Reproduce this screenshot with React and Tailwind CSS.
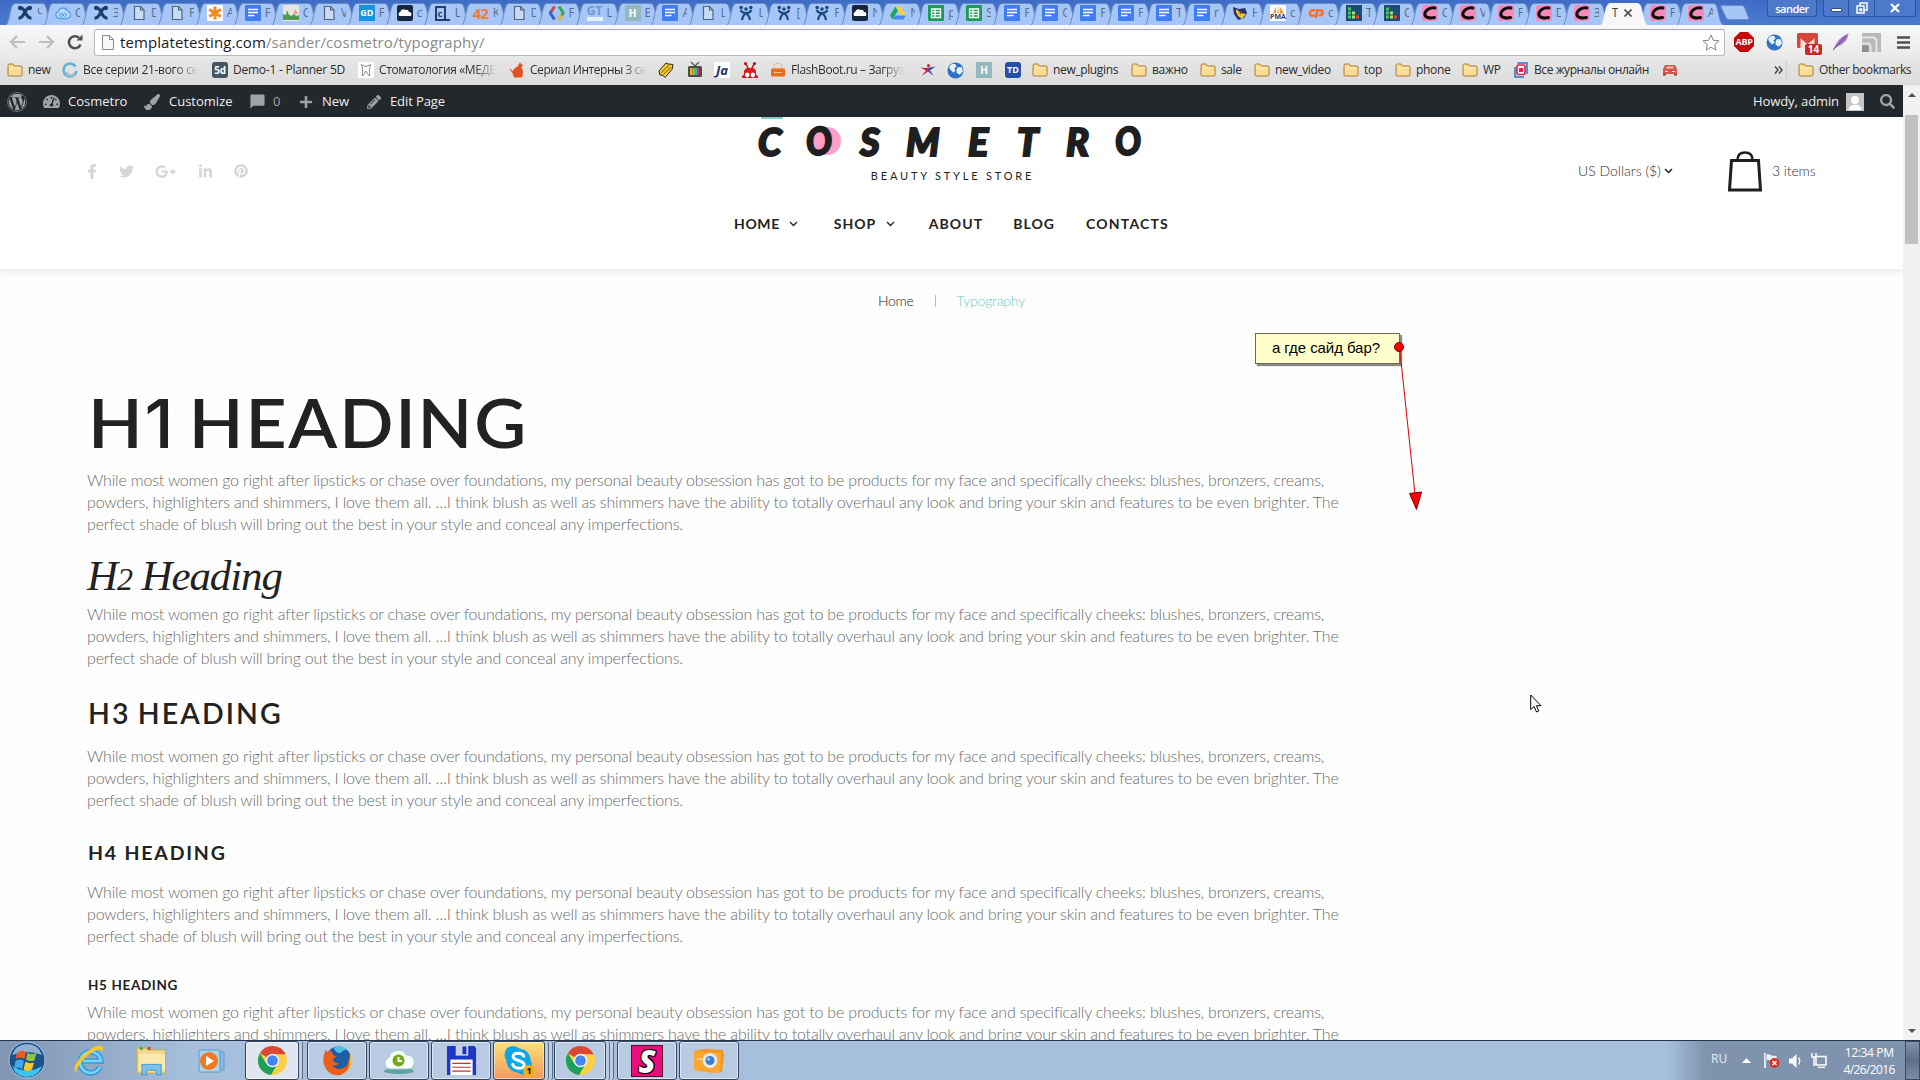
import React from "react";
import { FaFacebookF, FaTwitter, FaGooglePlusG, FaLinkedinIn, FaPinterest, FaWordpress, FaTachometerAlt, FaPaintBrush, FaPlus, FaPencilAlt, FaSearch } from "react-icons/fa";
import { MdModeComment } from "react-icons/md";

/* ---------- favicons ---------- */

const DocFile = () => (
  <svg viewBox="0 0 16 16" className="size-4">
    <path d="M3.500 1.500h6L13 5v9.500H3.500z" fill="#c6dbf7" stroke="#56647a" strokeWidth="1.200" />
    <path d="M9.500 1.500V5H13" fill="none" stroke="#56647a" strokeWidth="1.200" />
  </svg>
);
const Confluence = () => (
  <svg viewBox="0 0 16 16" className="size-4">
    <path d="M2 3c3-1 4.500 1 6 4s3 6.500 6.500 6M14 3c-3-1-4.500 1-6 4s-3 6.500-6.500 6" fill="none" stroke="#1c3c6b" strokeWidth="3" />
    <circle cx="3.200" cy="3" r="2.200" fill="#1c3c6b" />
    <circle cx="12.800" cy="3" r="2.200" fill="#1c3c6b" />
  </svg>
);
const Jira = () => (
  <svg viewBox="0 0 16 16" className="size-4">
    <circle cx="8" cy="4" r="1.800" fill="#1f4b82" />
    <circle cx="3.200" cy="2.600" r="1.800" fill="#1f4b82" />
    <circle cx="12.800" cy="2.600" r="1.800" fill="#1f4b82" />
    <path d="M2.500 5C4 8 6 7.500 8 8.500S11.500 12 12 15M13.500 5C12 8 10 7.500 8 8.500S4.500 12 4 15" fill="none" stroke="#1f4b82" strokeWidth="2.200" />
  </svg>
);
const GDoc = () => (
  <svg viewBox="0 0 16 16" className="size-4">
    <rect width="16" height="16" rx="1" fill="#3f7df0" />
    <path d="M3 4.500h10M3 7.500h10M3 10.500h6.500" stroke="#fff" strokeWidth="1.500" />
  </svg>
);
const GSheet = () => (
  <svg viewBox="0 0 16 16" className="size-4">
    <rect width="16" height="16" rx="1" fill="#1c9a58" />
    <path d="M3.500 4h9v8.500h-9zM3.500 6.800h9M3.500 9.600h9M7 4v8.500" fill="none" stroke="#fff" strokeWidth="1.300" />
  </svg>
);
const CloudOutline = () => (
  <svg viewBox="0 0 16 16" className="size-4">
    <path d="M4 13.500a3.500 3.500 0 0 1-.8-6.800A5 5 0 0 1 12.600 6a3.800 3.800 0 0 1-.4 7.500z" fill="#b9d8fb" stroke="#55a0ee" strokeWidth="1.300" />
    <circle cx="6" cy="9.800" r="1.600" fill="none" stroke="#55a0ee" />
    <circle cx="9.800" cy="9.800" r="1.600" fill="none" stroke="#55a0ee" />
  </svg>
);
const Asterisk = () => (
  <svg viewBox="0 0 16 16" className="size-4">
    <rect width="16" height="16" fill="#fff" />
    <path d="M8 1.500v13M2.200 4.500l11.600 7M13.800 4.500l-11.600 7" stroke="#f58a20" strokeWidth="3" />
  </svg>
);
const Castle = () => (
  <svg viewBox="0 0 16 16" className="size-4">
    <rect width="16" height="16" fill="#e9e6df" />
    <path d="M0 15V9l3 1 1-5 2 5 3 1 1-2 4 2 2-1v5z" fill="#4f9a4c" />
    <path d="M10 9l2.500-5L15 9z" fill="#e3a18f" />
  </svg>
);
const DarkCloud = () => (
  <svg viewBox="0 0 16 16" className="size-4">
    <rect width="16" height="16" rx="2" fill="#17263f" />
    <path d="M2.500 11a2.200 2.200 0 0 1 .8-4 3 3 0 0 1 5-2 2.800 2.800 0 0 1 3.700 2A2.200 2.200 0 0 1 13.500 11z" fill="#fff" />
  </svg>
);
const Brackets = () => (
  <svg viewBox="0 0 16 16" className="size-4">
    <path d="M3 5.500L1.200 8l4.300 6.500" fill="none" stroke="#3a62c9" strokeWidth="3" />
    <path d="M2.500 6.500L5.500 1.500" stroke="#e04535" strokeWidth="3" />
    <path d="M10 1.500l4.500 6.500" fill="none" stroke="#35a853" strokeWidth="3" />
    <path d="M14.500 7.500l-4.500 7" fill="none" stroke="#35a853" strokeWidth="3" />
    <path d="M12.500 10.500l-3 4.500" stroke="#f2b632" strokeWidth="3" />
  </svg>
);
const Drive = () => (
  <svg viewBox="0 0 16 16" className="size-4">
    <path d="M5.500 1.500L0 10.500l2.500 4L8 5.500z" fill="#1da462" />
    <path d="M5.500 1.500h5l5.500 9h-5z" fill="#fccd3e" />
    <path d="M5.300 10.500H16l-2.500 4H2.800z" fill="#4688f4" />
  </svg>
);
const Bee = () => (
  <svg viewBox="0 0 16 16" className="size-4">
    <path d="M1 2l6 2 6-1 2 5-3 5-6 2-4-6z" fill="#26307a" />
    <path d="M4 4l5 4 5 1-4 5-4-3-2-4z" fill="#f1c626" />
    <path d="M7 5l3 2-2 3z" fill="#7b4a17" />
  </svg>
);
const Pma = () => (
  <span className="flex size-4 flex-col items-center bg-white">
    <svg viewBox="0 0 16 9" className="h-[9px] w-4">
      <path d="M3 8.500L6 1v7.500zM7 8.500L8.500 0v8.500zM9.500 8.500L10 2l4 6.500z" fill="#f39a2c" />
    </svg>
    <span className="text-[7px] leading-[6px] font-bold text-[#3b3b56]">PMA</span>
  </span>
);
const CPanel = () => (
  <svg viewBox="0 0 16 16" className="size-4">
    <path d="M7 10.500H4.500a2.600 2.600 0 0 1 0-5.200H7M7.500 13l2-7.700h2.700a2.400 2.400 0 0 1 0 4.900h-1.500" fill="none" stroke="#ff6c2c" strokeWidth="2.600" />
  </svg>
);
const Squares = () => (
  <svg viewBox="0 0 16 16" className="size-4">
    <rect width="16" height="16" fill="#1d4c74" />
    <path d="M2 2.500h3v3H2zM2 6.500h3v3H2zM2 10.500h3v3H2z" fill="#4cc35c" />
    <path d="M6 6.500h3v3H6zM6 10.500h3v3H6z" fill="#a9dd7a" />
    <rect x="10" y="10.500" width="3" height="3" fill="#e0433e" />
  </svg>
);
const MarkerC = () => (
  <svg viewBox="0 0 16 16" className="size-4">
    <rect width="16" height="16" rx="3" fill="#f68bb9" />
    <path d="M13 3C8 2 3 5.500 2.800 9S8 13.500 12.500 12.500" fill="none" stroke="#0d0a0c" strokeWidth="3" strokeLinecap="round" />
  </svg>
);
const Gd = () => <span className="grid size-4 place-items-center bg-[#1695dd] text-[9px] font-bold text-white">GD</span>;
const CUnder = () => (
  <span className="flex size-4 items-end">
    <span className="grid h-[15px] w-[11px] place-items-center border-2 border-[#24406b] text-[9px] leading-none font-bold text-[#24406b]">c</span>
    <span className="h-[2px] w-[4px] bg-[#24406b]" />
  </span>
);
const FortyTwo = () => <span className="flex size-4 items-center justify-center text-[15px] leading-[12px] font-bold tracking-tighter text-[#f07b2c]">42</span>;
const Gt = () => <span className="flex size-4 items-center justify-center border-b-4 border-[#e6f0fb] text-[12px] leading-3 font-bold text-[#6f98cf]">GT</span>;
const HBox = () => <span className="grid size-4 place-items-center bg-[#93b8c0] text-[10px] font-bold text-white">H</span>;

const tabs = [
  [Confluence, "Ч"], [CloudOutline, "C"], [Confluence, "Э"], [DocFile, "D"], [DocFile, "F"], [Asterisk, "A"],
  [GDoc, "F"], [Castle, "C"], [DocFile, "V"], [Gd, "F"], [DarkCloud, "c"], [CUnder, "L"], [FortyTwo, "K"],
  [DocFile, "D"], [Brackets, "F"], [Gt, "L"], [HBox, "E"], [GDoc, "A"], [DocFile, "L"], [Jira, "L"], [Jira, "["],
  [Jira, "F"], [DarkCloud, "N"], [Drive, "N"], [GSheet, "p"], [GSheet, "S"], [GDoc, "F"], [GDoc, "C"], [GDoc, "F"],
  [GDoc, "F"], [GDoc, "T"], [GDoc, "r"], [Bee, "H"], [Pma, "c"], [CPanel, "c"], [Squares, "T"], [Squares, "C"],
  [MarkerC, "C"], [MarkerC, "V"], [MarkerC, "F"], [MarkerC, "D"], [MarkerC, "З"], [null, "T"], [MarkerC, "F"], [MarkerC, "A"],
];

function Tab({ Icon, label }) {
  const active = !Icon;
  return (
    <div className={active ? "relative z-10 flex h-[22px] w-[37.97px] shrink-0 items-center pb-[2px]" : "relative flex h-[22px] w-[37.97px] shrink-0 items-center pb-[2px]"}>
      <svg viewBox="0 0 46 22" className="absolute top-0 left-0 h-[22px] w-[46px]">
        <path d="M0 22C3 21 4 5 7 1.500Q8 .5 9 .5H36Q38 .5 39 2C41.500 6 42 20 46 22" fill={active ? "#f7f7f7" : "#a5c6f6"} stroke={active ? "#f7f7f7" : "#6a8cc6"} />
      </svg>
      {active ? (
        <>
          <span className="relative ml-[11px] w-[6px] overflow-hidden text-[12px] text-[#444]">T</span>
          <svg viewBox="0 0 8 8" className="relative ml-[6px] size-[8px] shrink-0">
            <path d="M.5.5l7 7M7.500.5l-7 7" stroke="#4d4d4d" strokeWidth="1.600" />
          </svg>
        </>
      ) : (
        <>
          <span className="relative ml-[11px]"><Icon /></span>
          <span className="relative ml-[4px] w-[5px] overflow-hidden text-[12px] text-[#5a6d8d]">{label}</span>
        </>
      )}
    </div>
  );
}

/* ---------- bookmark icons ---------- */

const Folder = () => (
  <svg viewBox="0 0 16 14" className="h-[14px] w-4">
    <path d="M1 12V2.500Q1 1 2.500 1H6l1.500 2H14q1 0 1 1v8q0 1-1 1H2q-1 0-1-1z" fill="#fbdc94" stroke="#a97a33" />
    <path d="M2 5h12" stroke="#fff0c8" />
  </svg>
);
const Swirl = () => (
  <svg viewBox="0 0 16 16" className="size-4">
    <path d="M13.500 4.500A6.500 6.500 0 1 0 14.500 9" fill="none" stroke="#58b2d8" strokeWidth="2.400" />
    <path d="M4 10a5 5 0 0 0 9 1" fill="none" stroke="#a8bccb" strokeWidth="2.400" />
  </svg>
);
const FiveD = () => <span className="grid size-4 place-items-center rounded-[3px] bg-[#46545f] text-[10px] font-bold text-white">5d</span>;
const Tooth = () => (
  <svg viewBox="0 0 16 16" className="size-4">
    <rect width="16" height="16" fill="#fff" />
    <path d="M3 2c2 3 2 7 1 12M13 2c-2 3-2 7-1 12M4 3q4 3 8 0M5 14l3-5 3 5" fill="none" stroke="#8d8d8d" />
  </svg>
);
const Fox = () => (
  <svg viewBox="0 0 16 16" className="size-4">
    <path d="M11 0l1 2 2 1-1.500 2.500c2 3 1.500 7 .5 10H5L4 12 0 6l4 3c1-3 4-4 5-5z" fill="#e4501c" />
  </svg>
);
const YellowRibbon = () => (
  <svg viewBox="0 0 16 16" className="size-4">
    <path d="M1 9L8 1l2 1 5 .5-1 5-7 8-2-2-3-.5z" fill="#f4d343" stroke="#222" />
    <path d="M3 11l8-8M5 13l8-8" stroke="#b98012" strokeWidth="1.400" />
  </svg>
);
const Tv = () => (
  <svg viewBox="0 0 16 16" className="size-4">
    <path d="M4 0l4 4 4-4" fill="none" stroke="#555" strokeWidth="1.300" />
    <rect x="1" y="4" width="14" height="11" rx="1.500" fill="#4c4a4a" />
    <path d="M3 6h2.500v7H3z" fill="#f5a623" /><path d="M5.500 6H8v7H5.500z" fill="#7ac143" /><path d="M8 6h2.500v7H8z" fill="#29a8e0" /><path d="M10.500 6H12v7h-1.500z" fill="#e23d3d" />
  </svg>
);
const Ja = () => <span className="grid size-4 place-items-center bg-white text-[13px] leading-4 font-bold text-[#1c2d63] italic">Ja</span>;
const Ant = () => (
  <svg viewBox="0 0 16 16" className="size-4">
    <path d="M4 2l2.500 5M12 2L9.500 7" stroke="#b3161b" strokeWidth="1.500" />
    <circle cx="3.500" cy="1.600" r="1.600" fill="#b3161b" /><circle cx="12.500" cy="1.600" r="1.600" fill="#b3161b" />
    <path d="M0 16v-2l2-1.500V9q1-3 4-3h4q3 0 4 3v3.500l2 1.500v2z" fill="#d81920" />
    <ellipse cx="5.200" cy="13" rx="2.200" ry="2.400" fill="#fff" /><ellipse cx="10.800" cy="13" rx="2.200" ry="2.400" fill="#fff" />
  </svg>
);
const Usb = () => (
  <svg viewBox="0 0 16 16" className="size-4">
    <path d="M4 3q4-4 8 0v4H4z" fill="#e8e1dc" stroke="#c9b8ad" />
    <rect x="1" y="6.500" width="14" height="8" rx="1" fill="#ea6f1c" />
    <path d="M4 10.500h8" stroke="#ffc594" />
  </svg>
);
const StarMan = () => (
  <svg viewBox="0 0 16 16" className="size-4">
    <circle cx="8.500" cy="3.500" r="1.500" fill="#c72038" />
    <path d="M6 6l9.500-1.500L10 8.500l4 5.500-5.500-4z" fill="#2a5ba8" />
    <path d="M.5 5.500L10 6.500 8 9.500 1.500 14 6 8.500z" fill="#c72038" />
  </svg>
);
const Globe = () => (
  <svg viewBox="0 0 16 16" className="size-[17px]">
    <circle cx="8" cy="8" r="7.500" fill="#2f72c4" />
    <path d="M3 3q3-2 5-1l1 2-2 2 1 2-2 2-3-3-1-2zM10 5l4 0 1 4-3 3-3-2 0-3z" fill="#e6f1fb" />
  </svg>
);
const Td = () => <span className="grid size-4 place-items-center rounded-[3px] bg-[#2450a8] text-[9px] font-bold text-white">TD</span>;
const Journal = () => (
  <svg viewBox="0 0 16 16" className="size-4">
    <path d="M4.500 1H14v11M2 5v10h9" fill="none" stroke="#2476c6" strokeWidth="1.500" />
    <rect x="4" y="3" width="8" height="9.500" rx="1.500" fill="#fff" stroke="#e2234f" strokeWidth="1.700" />
    <rect x="6" y="6" width="4" height="4" fill="#e2234f" />
  </svg>
);
const Car = () => (
  <svg viewBox="0 0 16 16" className="size-4">
    <path d="M1 7l2-4h10l2 4v5H1z" fill="#d2564a" /><path d="M4 6.500L5 4.500h6l1 2z" fill="#f3c8c2" /><path d="M1 12h3v1.500H1zM12 12h3v1.500h-3z" fill="#9b3129" />
    <path d="M3 9.500h3M10 9.500h3" stroke="#f8dcd8" />
  </svg>
);

const bookmarks = [
  [Folder, "new", "w-[55px] tracking-[-0.3px]"],
  [Swirl, "Все серии 21-вого се", "w-[150px] tracking-[-0.31px]", 1],
  [FiveD, "Demo-1 - Planner 5D", "w-[146px] tracking-[-0.24px]"],
  [Tooth, "Стоматология «МЕДЕ", "w-[151px] tracking-[-0.4px]", 1],
  [Fox, "Сериал Интерны 3 се", "w-[149px] tracking-[-0.45px]", 1],
  [YellowRibbon, "", "w-[29px]"], [Tv, "", "w-[27px]"], [Ja, "", "w-[28px]"], [Ant, "", "w-[28px]"],
  [Usb, "FlashBoot.ru – Загруз", "w-[150px] tracking-[-0.38px]", 1],
  [StarMan, "", "w-[27px]"], [Globe, "", "w-[29px]"], [HBox, "", "w-[29px]"], [Td, "", "w-[27px]"],
  [Folder, "new_plugins", "w-[99px] tracking-[-0.36px]"],
  [Folder, "важно", "w-[69px] tracking-[-0.3px]"],
  [Folder, "sale", "w-[54px] tracking-[-0.4px]"],
  [Folder, "new_video", "w-[89px] tracking-[-0.36px]"],
  [Folder, "top", "w-[52px] tracking-[-0.3px]"],
  [Folder, "phone", "w-[67px] tracking-[-0.3px]"],
  [Folder, "WP", "w-[51px] tracking-[-0.4px]"],
  [Journal, "Все журналы онлайн", "w-[149px] tracking-[-0.42px]"],
  [Car, "", "w-[20px]"],
];

function Bookmark({ Icon, label, size, clipped }) {
  return (
    <div className={"flex shrink-0 items-center " + size}>
      <span className="shrink-0"><Icon /></span>
      {label && (
        <span className={clipped ? "ml-[5px] bg-linear-to-r from-[#2b2b2b] from-80% to-[#dedede] to-100% bg-clip-text whitespace-nowrap text-transparent" : "ml-[5px] whitespace-nowrap"}>{label}</span>
      )}
    </div>
  );
}

/* ---------- browser chrome ---------- */

function TitleBar() {
  return (
    <div className="flex h-[25px] items-start bg-linear-to-b from-[#3e6cc4] to-[#4a7bd0] pl-[6px]">
      <div className="flex pt-[3px]">
        {tabs.map(([Icon, label], i) => <Tab key={i} Icon={Icon} label={label} />)}
      </div>
      <svg viewBox="0 0 30 15" className="mt-[5px] ml-[5px] h-[15px] w-[30px]">
        <path d="M1.500.5h20q2 0 3 2l4 10q.5 2-1 2H9q-2 0-3-2L1 2q-.5-1.500.5-1.500z" fill="#a5c6f6" stroke="#6a8cc6" />
      </svg>
      <div className="ml-auto flex pr-[4px]">
        <div className="h-[17px] w-[50px] rounded-b-[3px] border border-t-0 border-[#2d55a3] bg-[#4c79ca] text-center text-[11px] leading-[18px] font-semibold tracking-[-0.5px] text-white">sander</div>
        <div className="ml-[6px] flex h-[17px] w-[93px] divide-x divide-[#2d55a3] rounded-b-[3px] border border-t-0 border-[#2d55a3] bg-[#4c79ca]">
          <div className="flex w-[25px] items-end justify-center pb-[4px]"><span className="h-[4px] w-[11px] rounded-[1px] border border-[#31518c] bg-white" /></div>
          <div className="grid w-[26px] place-items-center">
            <svg viewBox="0 0 12 12" className="size-[12px]"><path d="M4 4V1h7v7H8M1 4h7v7H1zM4 7h1.500v1.500H4z" fill="none" stroke="#fff" strokeWidth="1.500" /></svg>
          </div>
          <div className="grid flex-1 place-items-center">
            <svg viewBox="0 0 10 10" className="size-[10px]"><path d="M1 1l8 8M9 1l-8 8" stroke="#fff" strokeWidth="2.200" /></svg>
          </div>
        </div>
      </div>
    </div>
  );
}

function AddressBar() {
  return (
    <div className="flex h-[34px] items-center bg-linear-to-b from-[#f8f8f8] to-[#e9e9e9] text-[#bdbdbd]">
      <svg viewBox="0 0 16 14" className="ml-[9px] h-[14px] w-4"><path d="M8 1L2 7l6 6M2 7h14" fill="none" stroke="currentColor" strokeWidth="2.200" /></svg>
      <svg viewBox="0 0 16 14" className="ml-[14px] h-[14px] w-4"><path d="M8 1l6 6-6 6M14 7H0" fill="none" stroke="currentColor" strokeWidth="2.200" /></svg>
      <svg viewBox="0 0 16 16" className="ml-[12px] size-4"><path d="M13.500 10.500A6 6 0 1 1 12 3.800" fill="none" stroke="#505050" strokeWidth="2.600" /><path d="M9.500 6.500H15.500V.5z" fill="#505050" /></svg>
      <div className="ml-[11px] flex h-[27px] w-[1631px] items-center rounded-[3px] border border-[#b9b9b9] border-t-[#a8a8a8] bg-white">
        <svg viewBox="0 0 12 15" className="ml-[7px] h-[15px] w-3"><path d="M.5.5h7l4 4v10H.5zM7.500.5v4h4" fill="#f7f7f7" stroke="#8b8b8b" /></svg>
        <div className="ml-[6px] text-[15px] leading-[20px] tracking-[0.09px] text-[#8a8a8a]"><span className="text-[#1a1a1a]">templatetesting.com</span>/sander/cosmetro/typography/</div>
        <svg viewBox="0 0 18 17" className="mr-[4px] ml-auto h-[17px] w-[18px]"><path d="M9 1l2.300 5.200 5.700.6-4.300 3.800 1.200 5.500L9 13.300l-4.900 2.800 1.200-5.500L1 6.800l5.700-.6z" fill="#fff" stroke="#848484" /></svg>
      </div>
      <div className="ml-[9px] grid size-[20px] place-items-center bg-[#c4090b] text-[9px] font-bold tracking-[-0.3px] text-white [clip-path:polygon(30%_0,70%_0,100%_30%,100%_70%,70%_100%,30%_100%,0_70%,0_30%)]">ABP</div>
      <span className="ml-[12px]"><Globe /></span>
      <div className="relative ml-[14px] h-[18px] w-[21px]">
        <svg viewBox="0 0 21 16" className="h-4 w-[21px]"><rect width="21" height="15" rx="1.500" fill="#d8433a" /><path d="M3.500 15V4l7 5.500 7-5.500v11z" fill="#f1dedc" /><path d="M1 1.500l9.500 8 9.500-8" fill="none" stroke="#d8433a" strokeWidth="2.500" /></svg>
        <span className="absolute top-[11px] left-[8px] h-[11px] w-[17px] rounded-[2px] bg-[#d02525] text-center text-[10px] leading-[11px] font-bold text-white">14</span>
      </div>
      <svg viewBox="0 0 17 18" className="ml-[14px] h-[18px] w-[17px]"><path d="M1 17L4 11Q6 7 10 4t6.500-3.500Q16 6 12 9.500t-6 3.500z" fill="#a47bc6" /><path d="M1 17L14 3" stroke="#5d3a86" /></svg>
      <svg viewBox="0 0 19 19" className="ml-[13px] size-[19px]"><rect width="19" height="19" fill="#b9b9b9" /><path d="M0 4.500H10q4.500 0 4.500 4.500V19M0 10.500h5q3.500 0 3.500 3.500V19" fill="none" stroke="#e6e6e6" strokeWidth="2" /><path d="M0 12.500h6.500V19H0z" fill="#8f8f8f" /></svg>
      <svg viewBox="0 0 13 13" className="ml-[16px] h-[13px] w-[13px]"><path d="M0 1.500h13M0 6.500h13M0 11.500h13" stroke="#505050" strokeWidth="2.600" /></svg>
    </div>
  );
}

function BookmarkBar() {
  return (
    <div className="flex h-[26px] items-center bg-linear-to-b from-[#e6e6e6] to-[#dcdcdc] pb-[4px] pl-[7px] text-[12px] text-[#2b2b2b]">
      {bookmarks.map(([Icon, label, size, clipped], i) => <Bookmark key={i} Icon={Icon} label={label} size={size} clipped={clipped} />)}
      <svg viewBox="0 0 9 8" className="ml-[92px] h-2 w-[9px]"><path d="M1 .5L4 4 1 7.500M5 .5L8 4 5 7.500" fill="none" stroke="#444" strokeWidth="1.500" /></svg>
      <span className="ml-[3px] h-5 w-px bg-[#cfcfcf]" />
      <span className="ml-[11px]"><Folder /></span>
      <span className="ml-[5px] tracking-[-0.43px] whitespace-nowrap">Other bookmarks</span>
    </div>
  );
}

/* ---------- site ---------- */

function AdminBar() {
  return (
    <div className="flex h-8 shrink-0 items-center bg-[#23282d] pt-[1px] text-[13px] text-[#eee]">
      <FaWordpress className="ml-[7px] size-[20px] text-[#9ea3a8]" />
      <FaTachometerAlt className="ml-[16px] size-[17px] text-[#9ea3a8]" />
      <span className="ml-[8px] w-[59px]">Cosmetro</span>
      <FaPaintBrush className="ml-[17px] size-[16px] text-[#9ea3a8]" />
      <span className="ml-[9px] w-[64px]">Customize</span>
      <MdModeComment className="ml-[16px] size-[17px] text-[#9ea3a8] -scale-x-100" />
      <span className="ml-[7px] w-[7px] text-[#9ea3a8]">0</span>
      <FaPlus className="ml-[19px] size-[14px] text-[#9ea3a8]" />
      <span className="ml-[9px] w-[27px]">New</span>
      <FaPencilAlt className="ml-[18px] size-[14px] text-[#9ea3a8]" />
      <span className="ml-[9px] tracking-[-0.1px] whitespace-nowrap">Edit Page</span>
      <span className="ml-auto tracking-[-0.1px]">Howdy, admin</span>
      <svg viewBox="0 0 18 18" className="ml-[7px] size-[18px]">
        <rect width="18" height="18" fill="#c5c5c5" />
        <circle cx="9" cy="7" r="4" fill="#fff" /><path d="M2.500 17q0-5 6.500-5.500 6.500.5 6.500 5.500z" fill="#fff" />
      </svg>
      <FaSearch className="mr-[8px] ml-[16px] size-[15px] text-[#9ea3a8]" />
    </div>
  );
}

const Chevron = ({ className }) => (
  <svg viewBox="0 0 9 6" className={"h-[6px] w-[9px] " + className}><path d="M1 1l3.500 3.500L8 1" fill="none" stroke="#222" strokeWidth="1.300" /></svg>
);

function Logo() {
  return (
    <div className="flex flex-col items-center">
      <div className="flex h-[2px] w-[387px] pl-[3px]"><span className="h-[2px] w-[22px] bg-[#83cbc5]" /></div>
      <div className="mt-[6px] flex h-[32px] w-[387px] text-[38px] leading-[32px] font-black text-[#1f1f1f] italic [-webkit-text-stroke:2px_#1f1f1f] [stroke-linejoin:round]">
        <span className="w-[48px] shrink-0">C</span>
        <span className="relative w-[54px] shrink-0">
          <span className="absolute top-[2px] left-[7px] size-[28px] rounded-full bg-[#ff9fc8]" />
          <span className="relative inline-block origin-left scale-x-90 -rotate-6">O</span>
        </span>
        <span className="w-[46px] shrink-0">S</span>
        <span className="w-[62px] shrink-0">M</span>
        <span className="w-[49px] shrink-0">E</span>
        <span className="w-[49px] shrink-0">T</span>
        <span className="w-[49px] shrink-0">R</span>
        <span className="inline-block w-[30px] shrink-0 origin-left scale-x-90 -rotate-6">O</span>
      </div>
      <div className="mt-[10px] ml-[2px] text-[11px] leading-[17px] tracking-[2.8px] text-[#1f1f1f]">BEAUTY STYLE STORE</div>
    </div>
  );
}

function Header() {
  return (
    <header className="flex h-[152px] shrink-0 justify-between bg-white shadow-[0_2px_8px_rgba(0,0,0,0.1)]">
      <div className="flex h-[108px] w-[600px] items-center pl-[87px] text-[#d6d6d6]">
        <FaFacebookF className="h-[15px] w-[10px]" />
        <FaTwitter className="ml-[22px] size-[15px]" />
        <FaGooglePlusG className="ml-[21px] size-[21px]" />
        <FaLinkedinIn className="ml-[22px] size-[15px]" />
        <FaPinterest className="ml-[21px] size-[14px]" />
      </div>
      <div className="flex w-[703px] flex-col items-center">
        <Logo />
        <nav className="mt-[29px] flex w-[435px] items-center text-[14px] leading-[22px] font-bold text-[#222]">
          <span className="w-[47px] tracking-[0.6px]">HOME</span><Chevron className="mr-[36px] ml-[8px]" />
          <span className="w-[43px] tracking-[1px]">SHOP</span><Chevron className="mr-[34px] ml-[9px]" />
          <span className="w-[85px] tracking-[1.1px]">ABOUT</span>
          <span className="w-[73px] tracking-[1px]">BLOG</span>
          <span className="tracking-[1.2px]">CONTACTS</span>
        </nav>
      </div>
      <div className="flex h-[107px] w-[600px] items-center pl-[275px] text-[14px] font-light text-[#333]">
        <span className="w-[84px] whitespace-nowrap">US Dollars ($)</span>
        <svg viewBox="0 0 9 6" className="ml-[2px] h-[6px] w-[9px]"><path d="M1 1l3.500 3.500L8 1" fill="none" stroke="#222" strokeWidth="1.500" /></svg>
        <svg viewBox="0 0 34 41" className="mt-[2px] ml-[55px] h-[41px] w-[34px]"><path d="M3.500 9.500h27l2 29.500H1.500z" fill="none" stroke="#1f1f1f" strokeWidth="3" /><path d="M9.500 9c0-5 3-7.500 7.500-7.500S24.500 4 24.500 9" fill="none" stroke="#1f1f1f" strokeWidth="2.500" /></svg>
        <span className="ml-[10px] tracking-[-0.1px]">3 items</span>
      </div>
    </header>
  );
}

function Copy({ className }) {
  return (
    <p className={"text-[16px] leading-[22px] font-light tracking-[-0.184px] whitespace-nowrap text-[#6c6c6c] " + className}>
      While most women go right after lipsticks or chase over foundations, my personal beauty obsession has got to be products for my face and specifically cheeks: blushes, bronzers, creams,
      <br />powders, highlighters and shimmers, I love them all. …I think blush as well as shimmers have the ability to totally overhaul any look and bring your skin and features to be even brighter. The
      <br />perfect shade of blush will bring out the best in your style and conceal any imperfections.
    </p>
  );
}

function Callout() {
  return (
    <div className="absolute top-[248px] left-[1255px] h-[180px] w-[170px]">
      <div className="h-[31px] w-[145px] border border-[#6b6b52] bg-[#ffffcc] pl-[16px] font-['Liberation_Sans',sans-serif] text-[15px] leading-[28px] tracking-[-0.07px] text-black shadow-[2px_2px_1px_#8a8a8a]">а где сайд бар?</div>
      <svg viewBox="0 0 170 180" className="absolute top-0 left-0 h-[180px] w-[170px]">
        <path d="M144.500 14L160 161" stroke="#e00000" />
        <circle cx="144" cy="14" r="4.500" fill="#f00" stroke="#700" strokeWidth="1" />
        <path d="M154.500 160.500l12-1.500-5 17.500z" fill="#f00" stroke="#700" strokeWidth="1" />
      </svg>
    </div>
  );
}

function Page() {
  return (
    <div className="relative flex h-[955px] w-[1903px] flex-col overflow-hidden bg-[#fefefe]">
      <AdminBar />
      <div className="flex flex-col font-['Lato',sans-serif]">
        <Header />
        <div className="mt-[22px] flex h-5 items-center justify-center text-[14px] leading-5 font-light">
          <span className="tracking-[-0.3px] text-[#222]">Home</span>
          <span className="mx-[21px] h-[12px] w-px bg-[#bbb]" />
          <span className="tracking-[-0.2px] text-[#6fcac8]">Typography</span>
        </div>
        <main className="px-[87px] text-[#222]">
          <h1 className="mt-[76px] ml-[1px] h-[70px] w-fit origin-left scale-x-105 text-[68px] leading-[70px] font-semibold tracking-[1.700px] [word-spacing:-6px]">H<span className="font-['Inter',sans-serif] text-[67px] leading-[60px] font-medium">1</span> HEADING</h1>
          <Copy className="mt-[12px]" />
          <h2 className="mt-[19px] h-[44px] font-['Liberation_Serif',serif] text-[43px] leading-[44px] tracking-[-1.1px] italic">H<span className="text-[32px] leading-[30px]">2</span> Heading</h2>
          <Copy className="mt-[5px]" />
          <h3 className="mt-[27px] ml-[1px] h-[34px] text-[28.500px] leading-[34px] font-semibold tracking-[2.1px] [word-spacing:-2px]">H3 HEADING</h3>
          <Copy className="mt-[15px]" />
          <h4 className="mt-[30px] ml-[1px] h-6 text-[19.500px] leading-6 font-bold tracking-[1.800px]">H4 HEADING</h4>
          <Copy className="mt-[16px]" />
          <h5 className="mt-[30px] ml-[1px] h-4 text-[13.500px] leading-4 font-bold tracking-[0.65px]">H5 HEADING</h5>
          <Copy className="mt-[8px]" />
        </main>
      </div>
      <Callout />
      <svg viewBox="0 0 12 19" className="absolute top-[609px] left-[1530px] h-[19px] w-3"><path d="M.7 1v14.500l3.400-3.100L6.500 18l2.300-1-2.400-5.300h4.600z" fill="#fff" stroke="#000" /></svg>
    </div>
  );
}

function Scrollbar() {
  return (
    <div className="flex h-[955px] w-[17px] flex-col items-center bg-[#f1f1f1]">
      <svg viewBox="0 0 8 4" className="mt-[8px] h-1 w-2"><path d="M0 4l4-4 4 4z" fill="#505050" /></svg>
      <div className="mt-[18px] h-[129px] w-[13px] bg-[#c1c1c1]" />
      <svg viewBox="0 0 8 4" className="mt-auto mb-[7px] h-1 w-2"><path d="M0 0l4 4 4-4z" fill="#505050" /></svg>
    </div>
  );
}

/* ---------- taskbar ---------- */

const Chrome = () => (
  <svg viewBox="0 0 32 32" className="size-[31px]">
    <circle cx="16" cy="16" r="15" fill="#fbd047" />
    <path d="M16 16L3 8.500A15 15 0 0 1 29.500 9.500H16z" fill="#dc4636" />
    <path d="M3 8.500A15 15 0 0 0 14.500 31l7-12L16 16 9.500 19z" fill="#1da05c" />
    <circle cx="16" cy="16" r="7" fill="#f4f4f4" />
    <circle cx="16" cy="16" r="5.500" fill="#4285f4" />
  </svg>
);
const Firefox = () => (
  <svg viewBox="0 0 32 32" className="size-[31px]">
    <circle cx="17" cy="14.500" r="13" fill="#1d5fa6" />
    <path d="M12 3Q20-1 27 5 23 4 19 8 15 9 12 3z" fill="#55bfe8" />
    <path d="M29.500 8q3.500 8-.5 15.500T16 31Q25 27 27 20t2.500-12z" fill="#fbc42d" />
    <path d="M4 5Q0 13 2 20t9 10.500Q18 33 24 28t4-14q-1 9-7.500 10.500T10.500 21q4 1 7-2-4 0-6.500-3.500 1-2.500 4-3-4-2-4.500-5L9 6Q7 6.500 6.500 8z" fill="#e8601c" />
  </svg>
);
const OwnDrive = () => (
  <svg viewBox="0 0 34 28" className="h-[28px] w-[34px]">
    <ellipse cx="17" cy="24" rx="15" ry="3" fill="#58a3a3" />
    <path d="M8 22a6 6 0 0 1-1-11.500A9.500 9.500 0 0 1 24.500 8 7 7 0 0 1 26 22z" fill="#f7fcfc" stroke="#a5cfc5" />
    <circle cx="16.500" cy="13.500" r="6" fill="#72a81c" />
    <path d="M16.500 10v4h3.500" fill="none" stroke="#fff" strokeWidth="1.800" />
  </svg>
);
const Floppy = () => (
  <svg viewBox="0 0 32 32" className="size-[31px]">
    <path d="M1 1h28l2 2v28H1z" fill="#1b37c4" />
    <path d="M10 0h13v11H10z" fill="#c9d2e2" /><path d="M17 1.500h4v8h-4z" fill="#1b37c4" />
    <path d="M4.500 15h23v16h-23z" fill="#fff" /><path d="M6.500 19h19M6.500 23h19M6.500 27h19" stroke="#c2322f" strokeWidth="1.200" />
  </svg>
);
const Skype = () => (
  <div className="relative size-[32px]">
    <svg viewBox="0 0 32 32" className="size-[31px]">
      <circle cx="10.500" cy="10" r="9" fill="#08a7e8" /><circle cx="21" cy="21.500" r="9" fill="#08a7e8" /><circle cx="16" cy="16" r="12.500" fill="#08a7e8" />
      <path d="M21.500 11.500C20 7.500 10.500 7.500 10.500 12S22 15.500 22 20.500 11.500 25 10 20" fill="none" stroke="#fff" strokeWidth="3.200" strokeLinecap="round" />
    </svg>
    <span className="absolute top-[20px] left-[20px] grid size-[12px] place-items-center rounded-full bg-[#f9ac18] text-[9px] leading-none font-bold text-black">1</span>
  </div>
);
const SLogo = () => <span className="grid size-[32px] place-items-center border border-[#5b0e33] bg-[#ec0c7c] text-[31px] leading-[28px] font-extrabold text-white italic [text-shadow:1px_1px_0_#000,-1px_-1px_0_#000,1px_-1px_0_#000,-1px_1px_0_#000]">S</span>;
const Camera = () => (
  <svg viewBox="0 0 32 26" className="h-[26px] w-8">
    <path d="M1 3l11-2 18 1 1 4-2 18-8 1-20-3z" fill="#f7941d" /><path d="M1 3l27 2-1 19-6 1L1 22z" fill="#fba832" />
    <circle cx="17" cy="12.500" r="7.500" fill="#e7e7ee" /><circle cx="17" cy="12.500" r="4.500" fill="#3f7bd1" /><circle cx="15.500" cy="11" r="1.500" fill="#a7cbf4" />
    <path d="M4 11h5" stroke="#fff" />
  </svg>
);

const taskButton = "grid h-[39px] place-items-center rounded-[3px] border border-[#35455c] shadow-[inset_0_0_0_1px_rgba(255,255,255,0.5)] ";

function Stack({ count }) {
  return Array.from({ length: count }, (_, i) => (
    <span key={i} className="h-[39px] w-[4px] rounded-r-[3px] border-r border-[#5a6b84] bg-[#b9cde4]" />
  ));
}

function Taskbar() {
  return (
    <div className="flex h-10 items-start border-t border-[#26384f] bg-linear-to-r from-[#7f95b2] via-[#a5bfdd] via-10% to-[#a5bfdd]">
      <svg viewBox="0 0 38 38" className="ml-[8px] size-[38px]">
        <circle cx="19" cy="19" r="18" fill="#1c5288" stroke="#a7c7e4" />
        <path d="M4 25Q19 34 34 25 30 36 19 36T4 25z" fill="#3ec3ee" /><path d="M4 14Q8 3 19 3t15 11Q19 8 4 14z" fill="#8fb0cf" />
        <path d="M9 12q5-4 9-1l-1.500 7q-5-3-9 0z" fill="#ee5a24" /><path d="M19.500 11.500q4 3 9 0l-2 8q-5 2-8.500-1z" fill="#8cc63f" />
        <path d="M7.500 20q4-3 8.500 0l-2 8q-4-3-8 0z" fill="#3fa9f5" /><path d="M17.500 20.500q4 3 8.500 1l-2 7q-4 3-8.500 0z" fill="#fbca2a" />
      </svg>
      <svg viewBox="0 0 32 32" className="mt-[3px] ml-[27px] size-[32px]">
        <path d="M27 23A10.500 10.500 0 1 1 28 17H10" fill="none" stroke="#2f9bdc" strokeWidth="5.500" />
        <path d="M27 23A10.500 10.500 0 1 1 28 17H10" fill="none" stroke="#7fd3f8" strokeWidth="2.500" />
        <path d="M3 30Q-2 22 10 11T29 2Q31 4 29 8 27 3 18 9T4 25q-1 3-1 5z" fill="#f6c928" />
      </svg>
      <svg viewBox="0 0 32 32" className="mt-[5px] ml-[31px] size-[31px]">
        <path d="M1 2h9l2 2h18v24H1z" fill="#f0d98a" stroke="#c9a74e" /><path d="M3 8h27v18H3z" fill="#fae9ac" />
        <path d="M6 30V19h20v11h-5v-5H11v5z" fill="#79c2ea" stroke="#4a98c8" /><path d="M4 1h3v3H4z" fill="#59a14a" /><path d="M12 1h3v3h-3z" fill="#d1432d" />
      </svg>
      <svg viewBox="0 0 28 26" className="mt-[7px] ml-[31px] h-[26px] w-[28px]">
        <path d="M8 4h18v18H8z" fill="#87bde0" stroke="#5b9bc6" /><path d="M1 2h21v22H1z" fill="#a9d4ee" stroke="#5b9bc6" />
        <circle cx="11" cy="13" r="9" fill="#f07a22" /><path d="M8 8l8 5-8 5z" fill="#fff" />
      </svg>
      <div className="ml-[19px] flex"><div className={taskButton + "w-[54px] bg-[#dfe6f0]"}><Chrome /></div><Stack count={1} /></div>
      <div className={taskButton + "ml-[4px] w-[60px] bg-[#b9cbe2]"}><Firefox /></div>
      <div className={taskButton + "ml-[2px] w-[60px] bg-[#b9cbe2]"}><OwnDrive /></div>
      <div className={taskButton + "ml-[2px] w-[60px] bg-[#b9cbe2]"}><Floppy /></div>
      <div className="ml-[2px] flex"><div className={taskButton + "w-[52px] bg-linear-to-b from-[#fbe07c] to-[#f19a5c]"}><Skype /></div><Stack count={2} /></div>
      <div className="ml-[1px] flex"><div className={taskButton + "w-[52px] bg-[#b9cbe2]"}><Chrome /></div><Stack count={2} /></div>
      <div className={taskButton + "ml-[3px] w-[60px] bg-[#b9cbe2]"}><SLogo /></div>
      <div className={taskButton + "ml-[2px] w-[60px] bg-[#b9cbe2]"}><Camera /></div>
      <div className="ml-auto flex h-[39px] w-[252px] items-center bg-linear-to-r from-[#a5bfdd] to-[#7f93ae] to-15% text-[12px] text-white">
        <span className="-mt-[4px] ml-[43px] text-[#e7edf5]">RU</span>
        <svg viewBox="0 0 9 5" className="ml-[15px] h-[5px] w-[9px]"><path d="M0 5L4.500 0 9 5z" fill="#fff" /></svg>
        <svg viewBox="0 0 17 17" className="ml-[12px] size-[17px]"><path d="M2 1v15" stroke="#fff" strokeWidth="1.600" /><path d="M3 2q3-1 5 .5T14 3v6q-3 1-5.500 0T3 9z" fill="#e9eef5" stroke="#4b5b73" strokeWidth=".5" /><circle cx="11.500" cy="11" r="5" fill="#d6342b" /><path d="M9.500 9l4 4M13.500 9l-4 4" stroke="#fff" strokeWidth="1.500" /></svg>
        <svg viewBox="0 0 13 14" className="ml-[9px] h-[14px] w-[13px]"><path d="M0 4.500h3L7.500 0v14L3 9.500H0z" fill="#fff" /><path d="M9.500 3.500q2.500 3.500 0 7" fill="none" stroke="#fff" strokeWidth="1.300" /></svg>
        <svg viewBox="0 0 16 15" className="ml-[9px] h-[15px] w-4"><path d="M5 3.500h10V12H5zM7 14.500h7M1 0v4h4V0M3 4v9" fill="none" stroke="#fff" strokeWidth="1.500" /></svg>
        <div className="ml-[15px] w-[54px] text-center leading-[17px] whitespace-nowrap"><div className="tracking-[-0.34px]">12:34 PM</div><div className="tracking-[-0.6px]">4/26/2016</div></div>
        <div className="ml-auto h-[39px] w-[15px] border border-[#3c4b60] bg-linear-to-b from-[#8294aa] via-[#5c6f87] to-[#7b8ea6]" />
      </div>
    </div>
  );
}

export default function App() {
  return (
    <div className="flex h-[1080px] w-[1920px] flex-col overflow-hidden bg-white font-['Open_Sans',sans-serif]">
      <TitleBar />
      <AddressBar />
      <BookmarkBar />
      <div className="flex h-[955px]">
        <Page />
        <Scrollbar />
      </div>
      <Taskbar />
    </div>
  );
}
